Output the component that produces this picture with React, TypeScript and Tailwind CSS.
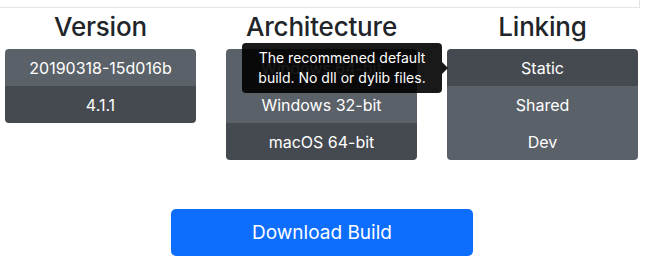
const columns = [
  { title: "Version", items: ["20190318-15d016b", "4.1.1"], active: 1 },
  { title: "Architecture", items: ["Windows 64-bit", "Windows 32-bit", "macOS 64-bit"], active: 2 },
  { title: "Linking", items: ["Static", "Shared", "Dev"], active: 0 },
];

function OptionList({ items, active }: { items: string[]; active: number }) {
  return (
    <div className="flex flex-col overflow-hidden rounded-[4px]">
      {items.map((item, i) => (
        <div
          key={item}
          className={
            i === active
              ? "flex h-[37px] items-center justify-center bg-[#454a51] text-base text-white"
              : "flex h-[37px] items-center justify-center bg-[#5b6169] text-base text-white"
          }
        >
          {item}
        </div>
      ))}
    </div>
  );
}

export default function App() {
  return (
    <div className="h-[267px] w-[658px] overflow-hidden bg-white font-['Inter',_'Liberation_Sans',_sans-serif] text-[#212529]">
      <div className="h-[8px] w-[640px] border-b border-r border-[#e3e5e8]" />
      <div className="relative flex gap-[30px] pl-[5px]">
        {columns.map((col) => (
          <div key={col.title} className="flex w-[191px] flex-col">
            <h2 className="flex h-[41px] items-center justify-center pb-[4px] text-[26px] font-medium tracking-[-0.2px]">
              {col.title}
            </h2>
            <OptionList items={col.items} active={col.active} />
          </div>
        ))}

        {/* tooltip over the Static option */}
        <div className="absolute left-[242px] top-[35px] flex items-center">
          <div className="w-[200px] rounded-[4px] bg-black/90 py-[5px] text-center text-[14px] leading-[20px] text-white">
            The recommened default
            <br />
            build. No dll or dylib files.
          </div>
          <div className="h-0 w-0 border-y-[6px] border-l-[6px] border-y-transparent border-l-black/90" />
        </div>
      </div>

      <div className="mt-[49px] flex justify-center pr-[14px]">
        <button className="h-[47px] w-[302px] rounded-[5px] bg-[#0d6efd] pt-[2px] text-[19px] text-white">
          Download Build
        </button>
      </div>
    </div>
  );
}
